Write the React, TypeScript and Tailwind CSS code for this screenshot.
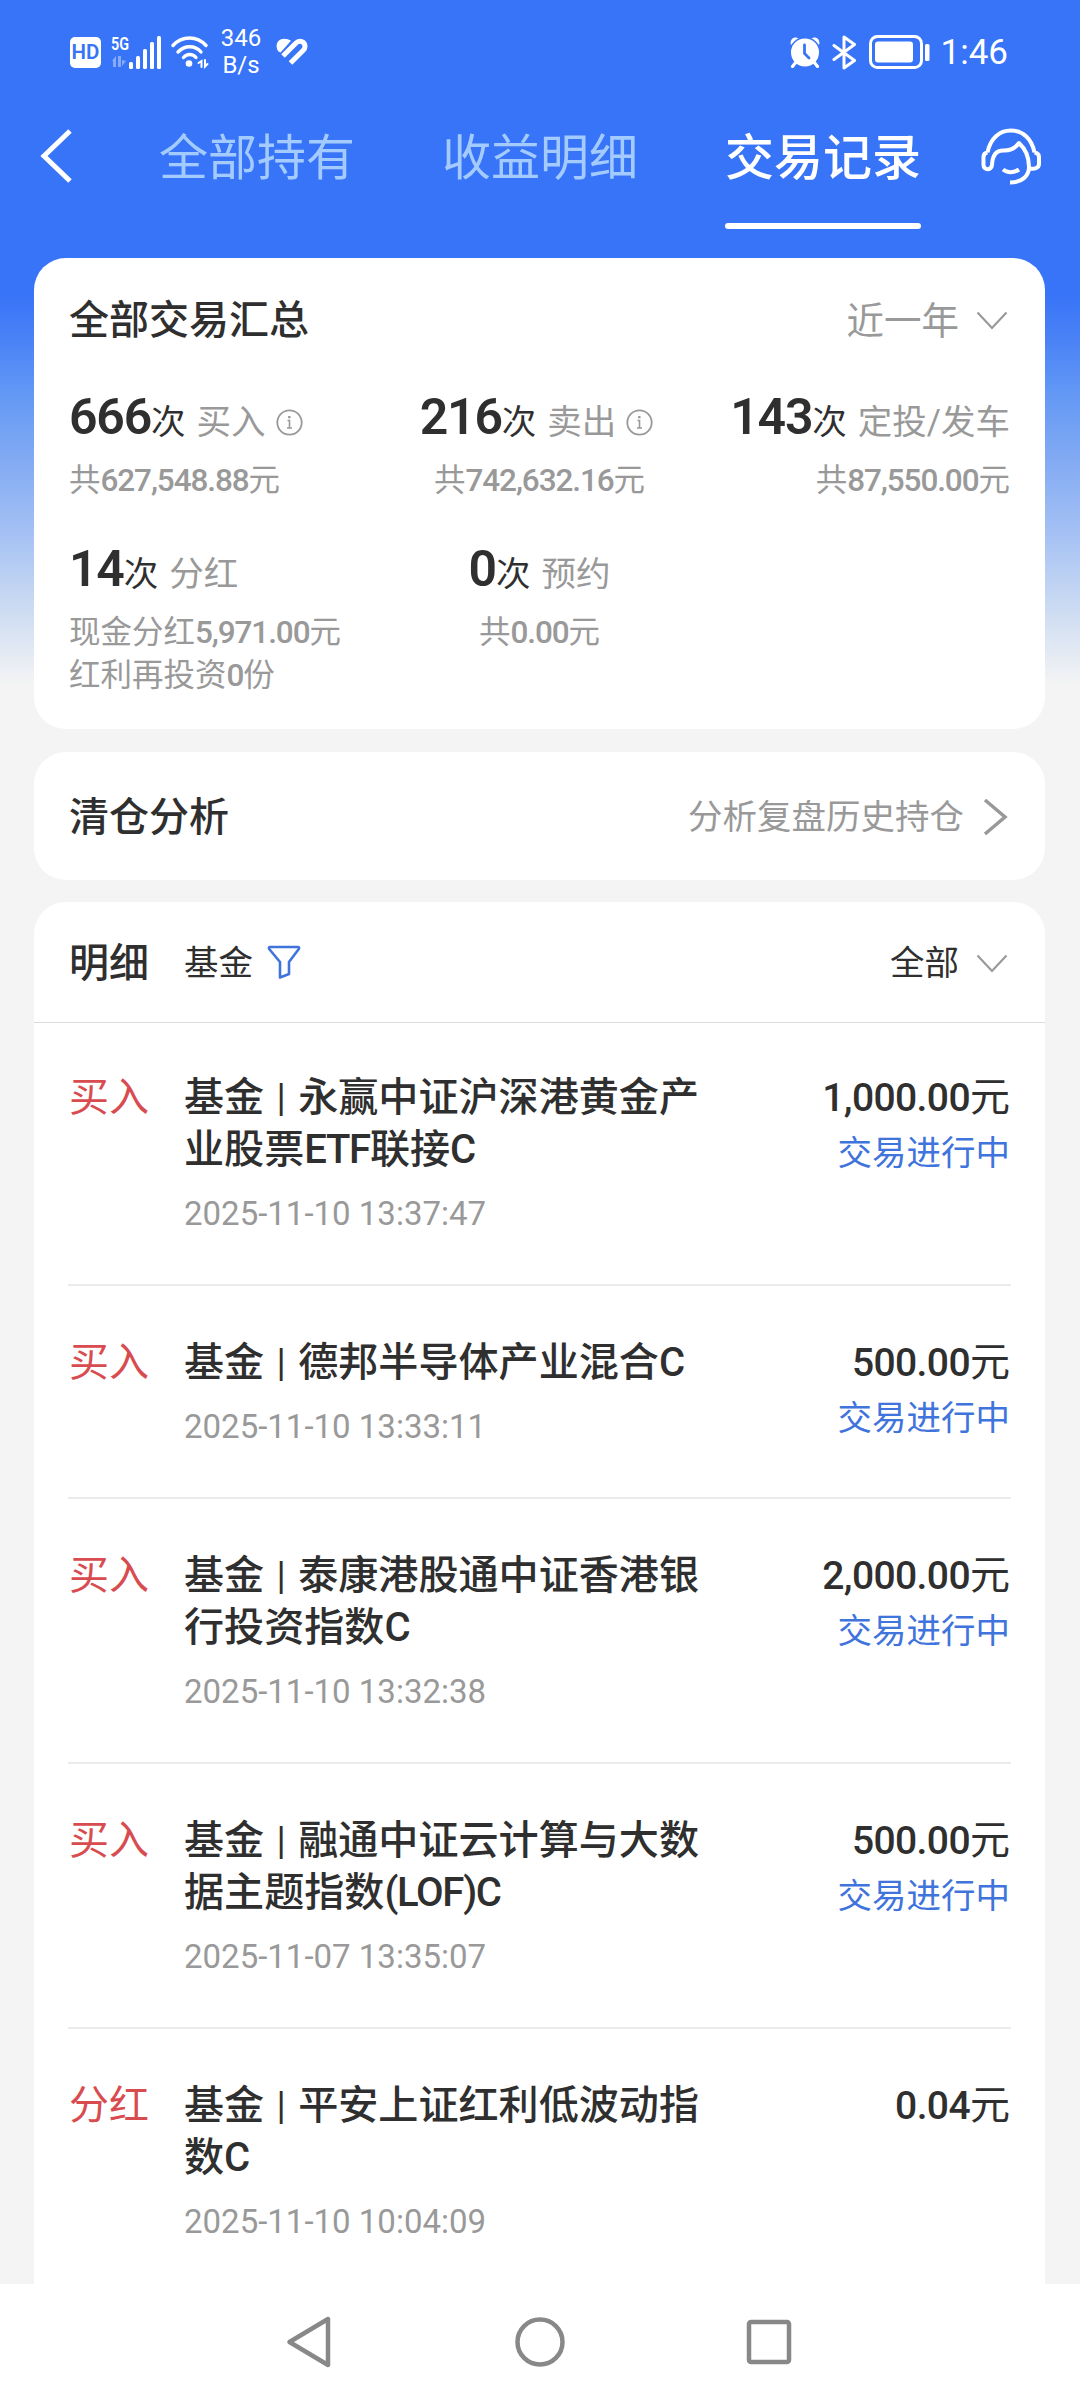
import type { ReactNode } from 'react';

type Stat = {
  count: string;
  label: string;
  info?: boolean;
  lines: string[];
};

type RecordItem = {
  type: string;
  title: string[];
  time: string;
  amount: string;
  status?: string;
};

const topStats: Stat[] = [
  { count: '666', label: '买入', info: true, lines: ['共627,548.88元'] },
  { count: '216', label: '卖出', info: true, lines: ['共742,632.16元'] },
  { count: '143', label: '定投/发车', lines: ['共87,550.00元'] },
];

const bottomStats: Stat[] = [
  { count: '14', label: '分红', lines: ['现金分红5,971.00元', '红利再投资0份'] },
  { count: '0', label: '预约', lines: ['共0.00元'] },
];

const records: RecordItem[] = [
  { type: '买入', title: ['永赢中证沪深港黄金产', '业股票ETF联接C'], time: '2025-11-10 13:37:47', amount: '1,000.00', status: '交易进行中' },
  { type: '买入', title: ['德邦半导体产业混合C'], time: '2025-11-10 13:33:11', amount: '500.00', status: '交易进行中' },
  { type: '买入', title: ['泰康港股通中证香港银', '行投资指数C'], time: '2025-11-10 13:32:38', amount: '2,000.00', status: '交易进行中' },
  { type: '买入', title: ['融通中证云计算与大数', '据主题指数(LOF)C'], time: '2025-11-07 13:35:07', amount: '500.00', status: '交易进行中' },
  { type: '分红', title: ['平安上证红利低波动指', '数C'], time: '2025-11-10 10:04:09', amount: '0.04' },
];

// Latin letters and digits get their own weight and tracking inside Chinese text
function Mixed({ text, latin }: { text: string; latin: string }) {
  return text.split(/([\x21-\x7e]+)/).map((part, i) => (
    <span key={i} className={i % 2 ? latin : ''}>{part}</span>
  ));
}

function StatusBar() {
  return (
    <div className="flex h-[104px] items-center justify-between pl-[70px] pr-[72px] text-white">
      <div className="flex items-center">
        <div className="h-[31px] w-[31px] rounded-[5px] bg-white text-center text-[20.500px] font-semibold leading-[31px] text-[#3874f7]">
          HD
        </div>
        <svg className="ml-[10px]" width="51" height="50" viewBox="0 -8 51 50" fill="white">
          <text x="0" y="15" fontSize="19" fontWeight="600" textLength="18" lengthAdjust="spacingAndGlyphs">5G</text>
          <g opacity="0.4">
            <path d="M1 26l4-5v11H2v-6zM7 21h3v11H7zM11 25l4 1-4 5z" />
          </g>
          <rect x="18" y="27" width="4" height="7" rx="1.5" />
          <rect x="25" y="21" width="4" height="13" rx="1.5" />
          <rect x="32" y="14" width="4" height="20" rx="1.5" />
          <rect x="39" y="7" width="4" height="27" rx="1.5" />
          <rect x="46" y="1" width="4" height="33" rx="1.5" />
        </svg>
        <svg className="ml-[9px]" width="38" height="34" viewBox="0 0 38 34" fill="none" stroke="white" strokeWidth="3.4" strokeLinecap="round">
          <path d="M2 10.500C11 .5 26 .5 35 10.500" />
          <path d="M7 17c6.500-7 17-7 23 0" />
          <path d="M12.500 22.500c3.500-4 9-4 12.500 0" />
          <circle cx="18" cy="28.500" r="3.300" fill="white" stroke="none" />
          <path d="M27.500 28l3-2v6M34 25v6.500l2.500-2.500" strokeWidth="2" />
        </svg>
        <div className="ml-[11px] w-[42px] text-center text-[24px] leading-[27px]">
          <div>346</div>
          <div>B/s</div>
        </div>
        <svg className="ml-[14px]" width="32" height="28" viewBox="0 0 32 28" fill="none">
          <path d="M2.500 13.500C-2 7 2 .8 8 .8c3 0 5 .8 7 2L4.500 14.500z" fill="white" />
          <path d="M7 18L19.500 5.500c4-4 9.500-2 9.500 3 0 1.500-.8 3-2 4L14.500 25" stroke="white" strokeWidth="5" />
          <path d="M10.500 21.500L22 10" stroke="#3874f7" strokeWidth="1.600" />
        </svg>
      </div>
      <div className="flex items-center">
        <svg width="32" height="32" viewBox="0 0 32 32" fill="none">
          <path d="M2 9C0 3 6-1 10 3zM30 9c2-6-4-10-8-6z" fill="white" />
          <circle cx="16" cy="16.500" r="15.500" fill="#3874f7" />
          <path d="M7 26l-3.500 4.500M25 26l3.500 4.500" stroke="white" strokeWidth="3.200" strokeLinecap="round" />
          <circle cx="16" cy="16.500" r="14" fill="white" />
          <path d="M15.500 9v8.500l4.500 4.500" stroke="#3874f7" strokeWidth="2.800" strokeLinecap="round" />
        </svg>
        <svg className="ml-[11px]" width="25" height="35" viewBox="0 0 25 35" fill="none" stroke="white" strokeWidth="3" strokeLinejoin="round" strokeLinecap="round">
          <path d="M2 10.500L22.500 25.500 12 33V2l10.500 7.500L2 24.500" />
        </svg>
        <svg className="ml-[12px]" width="61" height="34" viewBox="0 0 61 34" fill="none">
          <rect x="1.500" y="1.500" width="51" height="31" rx="7" stroke="white" strokeWidth="3" />
          <rect x="6" y="6.500" width="38" height="21" rx="3" fill="white" />
          <rect x="56" y="9" width="4.500" height="17" rx="1.500" fill="white" />
        </svg>
        <span className="ml-[11px] pt-[2px] text-[35px] leading-[50px]">1:46</span>
      </div>
    </div>
  );
}

function NavTabs() {
  return (
    <div className="flex h-[154px] items-start pl-[40px] pt-[11px]">
      <svg className="mt-[14px] shrink-0" width="32" height="54" viewBox="0 0 32 54" fill="none" stroke="white" strokeWidth="5">
        <path d="M30 2L4 27l26 25" />
      </svg>
      <div className="ml-[87px] flex gap-[87px] text-[49px] leading-[88px] text-[#a3cbff]">
        <div>全部持有</div>
        <div>收益明细</div>
        <div className="font-medium text-white">
          <div>交易记录</div>
          <div className="mt-[20px] h-[6px] rounded-full bg-white" />
        </div>
      </div>
      <svg className="ml-[60px] mt-[12px] shrink-0" width="62" height="60" viewBox="0 0 62 60" fill="none" stroke="white" strokeWidth="4" strokeLinejoin="round">
        <path d="M6.500 25.500C9 12 18 3.500 30 3.500S51 12 53.500 25.500" />
        <path d="M6.500 25.500C3.500 26 2.500 28 2.500 30v8c0 5.500 8 5.500 8.500 0C11.500 28 15.500 23.500 22 23.500c7 .5 12-2 16-7.500 5.500 5 10 13 10 24 0 9-7 15.500-19 15.500" />
        <path d="M53.500 25.500c3 .5 4.500 2 4.500 4.500v7c0 3.500-4 5.500-9.500 4.500" />
        <path d="M22 42.500c4 3.500 11 3.500 16 0" />
      </svg>
    </div>
  );
}

function ChevronDown() {
  return (
    <svg width="32" height="20" viewBox="0 0 32 20" fill="none" stroke="#999" strokeWidth="2.200">
      <path d="M1.500 1.500L16 17 30.500 1.500" />
    </svg>
  );
}

function Card({ className, children }: { className: string; children: ReactNode }) {
  return <section className={`ml-[34px] w-[1011px] bg-white ${className}`}>{children}</section>;
}

function StatBlock({ stat, align }: { stat: Stat; align: string }) {
  return (
    <div className={`flex flex-col ${align}`}>
      <div className="flex h-[60px] items-baseline whitespace-nowrap leading-[60px]">
        <span className="text-[50px] font-semibold tracking-[-1.2px]">{stat.count}</span>
        <span className="text-[34.500px]">次</span>
        <span className="ml-[11px] text-[34.500px] text-[#999]">{stat.label}</span>
        {stat.info && (
          <svg className="ml-[10px] mr-[6px] translate-y-[5px] self-center" width="27" height="27" viewBox="0 0 27 27" fill="none" stroke="#999" strokeWidth="1.800">
            <circle cx="13.500" cy="13.500" r="12.200" />
            <path d="M11.500 11.500h2V19M11 19h5" strokeWidth="1.600" />
            <path d="M13.300 7v2.300" strokeWidth="2.400" />
          </svg>
        )}
      </div>
      <div className="mt-[12px] whitespace-nowrap text-[31.500px] leading-[43px] text-[#999]">
        {stat.lines.map((line) => (
          <div key={line}>
            <Mixed text={line} latin="font-medium tracking-[-1.1px]" />
          </div>
        ))}
      </div>
    </div>
  );
}

function Summary() {
  return (
    <Card className="h-[471px] rounded-[32px] px-[35px] pt-[34px]">
      <div className="flex h-[58px] items-center justify-between pr-[2px]">
        <h2 className="text-[40px] font-medium">全部交易汇总</h2>
        <div className="flex items-center gap-[17px] text-[37.500px] text-[#999]">
          近一年
          <ChevronDown />
        </div>
      </div>
      <div className="mt-[37px] grid grid-cols-[314px_313px_314px]">
        <StatBlock stat={topStats[0]} align="items-start" />
        <StatBlock stat={topStats[1]} align="items-center" />
        <StatBlock stat={topStats[2]} align="items-end" />
      </div>
      <div className="mt-[37px] grid grid-cols-[314px_313px_314px]">
        <StatBlock stat={bottomStats[0]} align="items-start" />
        <StatBlock stat={bottomStats[1]} align="items-center" />
      </div>
    </Card>
  );
}

function RecordRow({ item }: { item: RecordItem }) {
  return (
    <li className="mx-[34px] flex border-b-2 border-[#ebebeb] pb-[46px] pt-[51px] first:pt-[49px] last:border-b-0">
      <div className="w-[116px] shrink-0 pl-px text-[40px] leading-[52px] text-[#d84c50]">{item.type}</div>
      <div className="flex-1">
        <div className="whitespace-nowrap text-[40.100px] font-medium leading-[52px]">
          {item.title.map((line, i) => (
            <div key={line}>
              {i === 0 && (
                <>
                  基金<span className="mx-[12px] inline-block w-[10px] text-center text-[38px] font-normal leading-none">|</span>
                </>
              )}
              <Mixed text={line} latin="tracking-[-1.3px]" />
            </div>
          ))}
        </div>
        <div className="mt-[14px] text-[33px] leading-[48px] text-[#999]">{item.time}</div>
      </div>
      <div className="pr-px text-right">
        <div className="text-[40px] leading-[52px]">
          <span className="text-[39px] font-medium tracking-[-0.6px]">{item.amount}</span>元
        </div>
        {item.status && <div className="mt-[4px] text-[34.500px] leading-[50px] text-[#3f74dc]">{item.status}</div>}
      </div>
    </li>
  );
}

function Details() {
  return (
    <Card className="mt-[22px] h-[1382px] overflow-hidden rounded-t-[32px]">
      <div className="flex h-[121px] items-center border-b border-[#dcdcdc] pl-[35px] pr-[37px] pt-[3px]">
        <h2 className="text-[40px] font-medium">明细</h2>
        <span className="ml-[35px] text-[34.500px]">基金</span>
        <svg className="ml-[14px] -translate-y-[2px]" width="34" height="34" viewBox="0 0 34 34" fill="none" stroke="#3f74dc" strokeWidth="2.600" strokeLinejoin="round">
          <path d="M3 2h28c1 0 1.400 1 .8 2L22 17v12l-9 3.500V17L2.200 4C1.600 3 2 2 3 2z" />
        </svg>
        <span className="ml-auto mr-[17px] text-[34.500px]">全部</span>
        <ChevronDown />
      </div>
      <ul>
        {records.map((item) => (
          <RecordRow key={item.time} item={item} />
        ))}
      </ul>
    </Card>
  );
}

function SystemNav() {
  return (
    <div className="flex h-[116px] bg-white pl-[283px] pt-[31px]">
      <svg width="50" height="54" viewBox="0 0 50 54" fill="none" stroke="#888" strokeWidth="4.500" strokeLinejoin="round">
        <path d="M45 4v46L6.500 27z" />
      </svg>
      <svg className="ml-[180px]" width="54" height="54" viewBox="0 0 54 54" fill="none" stroke="#888" strokeWidth="4.500">
        <circle cx="27" cy="27" r="22.500" />
      </svg>
      <svg className="ml-[177px]" width="50" height="54" viewBox="0 0 50 54" fill="none" stroke="#888" strokeWidth="4.500">
        <rect x="5" y="7" width="40" height="40" rx="2" />
      </svg>
    </div>
  );
}

export default function App() {
  return (
    <div className="h-[2400px] w-[1080px] overflow-hidden bg-[#f4f4f4] bg-[linear-gradient(180deg,#3874f7_0px,#3874f7_295px,#4a82f6_340px,#6197f5_390px,#82aaf3_460px,#a8c3f4_540px,#d2dff2_620px,#f4f4f4_685px)] font-['Roboto','Noto_Sans_CJK_SC',sans-serif] text-[#2f2f2f]">
      <StatusBar />
      <NavTabs />
      <Summary />
      <Card className="mt-[23px] flex h-[128px] items-center justify-between rounded-[32px] pl-[35px] pr-[37px] pt-[3px]">
        <h2 className="text-[40px] font-medium">清仓分析</h2>
        <div className="flex items-center gap-[19px] text-[34.500px] text-[#999]">
          分析复盘历史持仓
          <svg className="-translate-y-px" width="25" height="38" viewBox="0 0 25 38" fill="none" stroke="#999" strokeWidth="3.500">
            <path d="M2 2l20 17L2 36" />
          </svg>
        </div>
      </Card>
      <Details />
      <SystemNav />
    </div>
  );
}
